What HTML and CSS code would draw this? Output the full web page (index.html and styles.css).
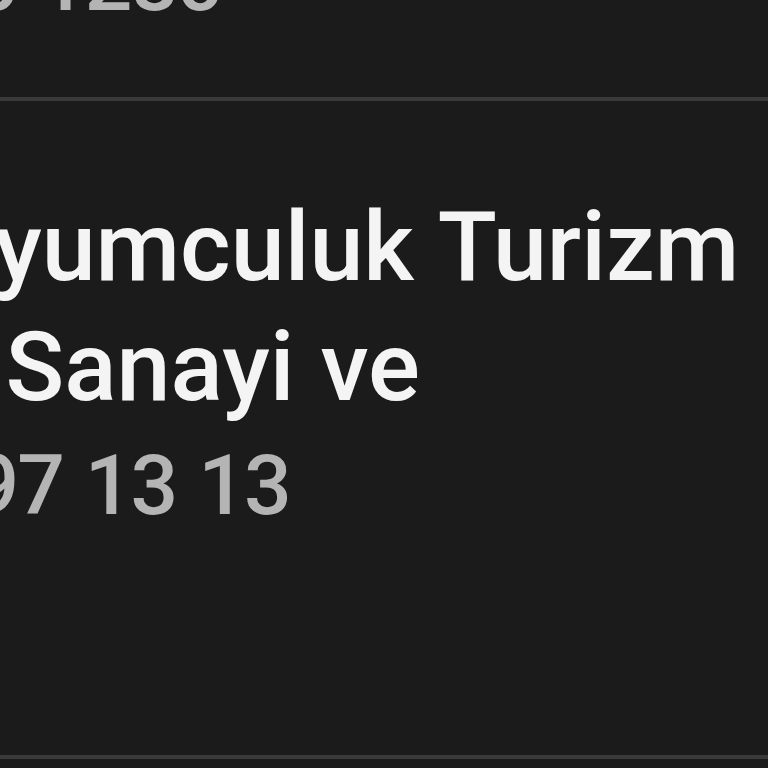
FILE: index.html
```html
<!DOCTYPE html>
<html lang="tr">
<head>
<meta charset="utf-8">
<title>Liste</title>
<link rel="stylesheet" href="styles.css">
</head>
<body>
<div class="list">
  <div class="row row-top">
    <div class="phone">850 1280</div>
  </div>
  <div class="row">
    <div class="title">
      <div class="line">Kuyumculuk Turizm</div>
      <div class="line">ve Sanayi ve</div>
    </div>
    <div class="phone">0597 13 13</div>
  </div>
</div>
</body>
</html>
```

FILE: styles.css
```css
html, body {
  margin: 0;
  padding: 0;
  background: #1b1b1b;
  overflow: hidden;
  height: 768px;
}
.list {
  margin-top: -77px;
  margin-left: -120px;
  font-family: Roboto, "Noto Sans", sans-serif;
  font-weight: 500;
}
.row {
  border-bottom: 4px solid #3a3a3a;
  padding-top: 86px;
  padding-bottom: 211px;
}
.row-top {
  padding-top: 0;
  padding-bottom: 57px;
}
.line {
  white-space: nowrap;
  color: #f4f4f4;
  font-size: 97px;
  line-height: 120px;
  word-spacing: 2px;
}
.phone {
  white-space: nowrap;
  color: #b4b4b4;
  font-size: 84px;
  line-height: 117px;
  letter-spacing: -2px;
  word-spacing: 3px;
}
```
